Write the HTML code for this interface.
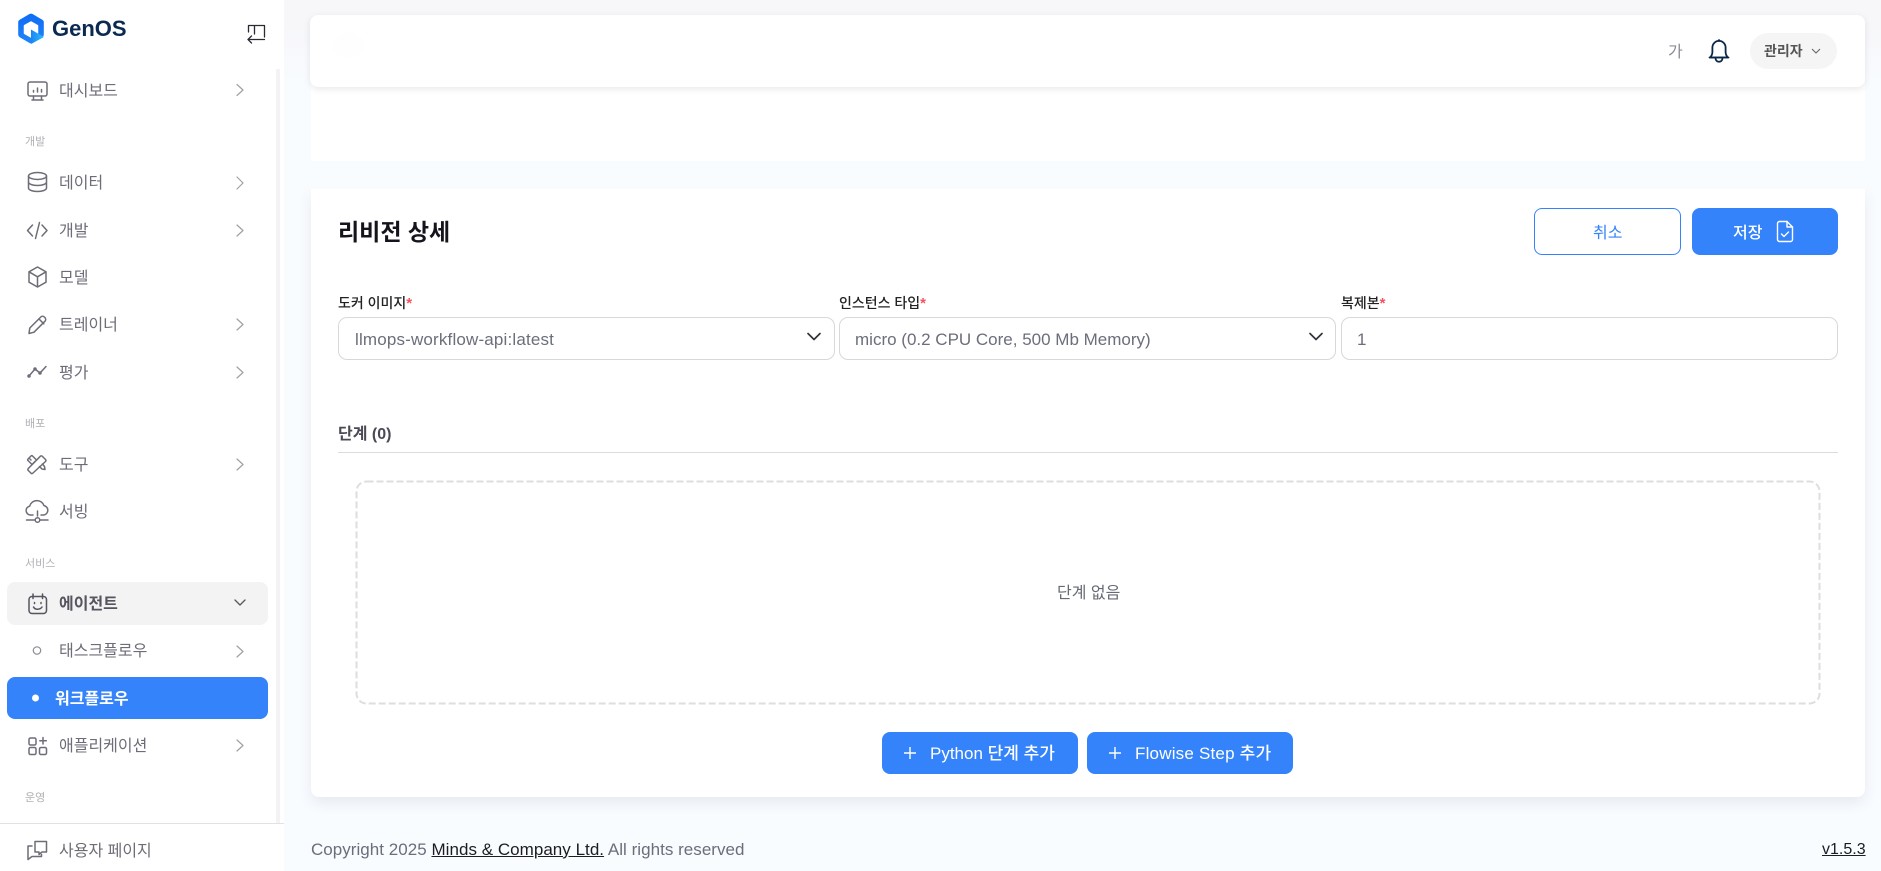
<!DOCTYPE html>
<html lang="ko"><head><meta charset="utf-8"><title>GenOS</title>
<style>
*{box-sizing:border-box}
html,body{margin:0;padding:0;width:1881px;height:871px;overflow:hidden;background:#f9fcff;font-family:"Liberation Sans","Noto Sans CJK KR",sans-serif}
.t{position:absolute;white-space:nowrap;line-height:24px;height:24px}
.box{position:absolute}
.m{font-size:16px;color:#6d6d78;left:59px}
.s{font-size:11px;color:#b0b0b6;left:25px}
.lab{font-size:14px;color:#222;font-weight:500;top:291px}
.lab i{color:#f4525f;font-style:normal;font-weight:700;font-size:15px}
.sel{position:absolute;top:317px;height:43px;border:1.5px solid #d8d8da;border-radius:9px;background:#fff}
.val{font-size:17px;color:#6b6e7b;top:328px}
.btn{position:absolute;background:#3483fa;border-radius:8px}
</style></head><body>
<div class="box" style="left:284px;top:0;width:1597px;height:90px;background:linear-gradient(#f7f7fa,#f7f7fa 30%,#f9fcff)"></div>

<!-- cards -->
<div class="box" style="left:311px;top:60px;width:1554px;height:101px;background:#fff"></div>
<div class="box" style="left:311px;top:161px;width:1554px;height:28px;background:#f9fcff"></div>
<div class="box" style="left:311px;top:189px;width:1554px;height:608px;background:#fff;border-radius:0 0 8px 8px;box-shadow:0 6px 14px rgba(40,60,90,.09);clip-path:inset(0 -30px -30px -30px)"></div>
<div class="box" style="left:310px;top:15px;width:1555px;height:72px;background:#fff;border-radius:8px;box-shadow:0 2px 7px rgba(30,30,60,.1)"></div>
<div class="box" style="left:333px;top:33px;width:31px;height:25px;background:#fefefe;border-radius:50%"></div>

<!-- header -->
<div class="t" style="left:1668px;top:41px;font-size:16px;color:#8c8c94">가</div>
<svg class="box" style="left:1705px;top:36px" width="28" height="30" viewBox="0 0 28 30" fill="none" stroke="#0b2748" stroke-width="1.8" stroke-linecap="round" stroke-linejoin="round"><path d="M5 21.5c1.6-1.6 2.4-3.2 2.4-5.5v-4.5a6.6 6.6 0 0 1 13.2 0V16c0 2.300.8 3.900 2.400 5.500z"/><path d="M4.500 21.500h19"/><path d="M10.500 22c0 5 7 5 7 0"/><path d="M14 4v1"/></svg>
<div class="box" style="left:1750px;top:33px;width:87px;height:36px;border-radius:18px;background:#f5f5f5"></div>
<div class="t" style="left:1764px;top:39px;font-size:14px;font-weight:700;color:#555">관리자</div>
<svg class="box" style="left:1811px;top:47px" width="10" height="8" viewBox="0 0 10 8" fill="none" stroke="#666" stroke-width="1.100"><path d="M1 2l4 4 4-4"/></svg>

<!-- title & buttons -->
<div class="t" style="left:338px;top:219px;font-size:23px;font-weight:700;color:#14141c;line-height:26px;height:26px">리비전 상세</div>
<div class="box" style="left:1534px;top:208px;width:147px;height:47px;border:1.500px solid #3483fa;border-radius:8px;background:#fff"></div>
<div class="t" style="left:1593px;top:221.500px;font-size:16px;color:#3483fa">취소</div>
<div class="btn" style="left:1692px;top:208px;width:146px;height:47px"></div>
<div class="t" style="left:1733px;top:221.500px;font-size:16px;color:#fff;font-weight:500">저장</div>
<svg class="box" style="left:1776px;top:220px" width="18" height="23" viewBox="0 0 18 23" fill="none" stroke="#fff" stroke-width="1.400" stroke-linecap="round" stroke-linejoin="round"><path d="M3.500 1.500H11l5.500 5.500v12.500a2 2 0 0 1-2 2h-11a2 2 0 0 1-2-2v-16a2 2 0 0 1 2-2z"/><path d="M11 1.500V7h5.500"/><path d="M5.500 14l2.500 2.500 4.500-4.500"/></svg>

<!-- form -->
<div class="t lab" style="left:338px">도커 이미지<i>*</i></div>
<div class="t lab" style="left:839px">인스턴스 타입<i>*</i></div>
<div class="t lab" style="left:1341px">복제본<i>*</i></div>
<div class="sel" style="left:338px;width:497px"></div>
<div class="sel" style="left:839px;width:497px"></div>
<div class="sel" style="left:1341px;width:497px"></div>
<div class="t val" style="left:355px;letter-spacing:.17px">llmops-workflow-api:latest</div>
<div class="t val" style="left:855px">micro (0.2 CPU Core, 500 Mb Memory)</div>
<div class="t val" style="left:1357px">1</div>
<svg class="box" style="left:806px;top:331px" width="16" height="12" viewBox="0 0 16 12" fill="none" stroke="#33333c" stroke-width="1.700" stroke-linecap="round" stroke-linejoin="round"><path d="M2 2.500l6 6 6-6"/></svg>
<svg class="box" style="left:1308px;top:331px" width="16" height="12" viewBox="0 0 16 12" fill="none" stroke="#33333c" stroke-width="1.700" stroke-linecap="round" stroke-linejoin="round"><path d="M2 2.500l6 6 6-6"/></svg>

<div class="t" style="left:338px;top:423px;font-size:16px;font-weight:600;color:#4a4a55">단계 (0)</div>
<div class="box" style="left:338px;top:452px;width:1500px;height:1px;background:#dcdcdf"></div>

<svg class="box" style="left:355px;top:480px" width="1466" height="225" viewBox="0 0 1466 225" fill="none"><rect x="1.500" y="1.500" width="1463" height="222" rx="10" stroke="#dedede" stroke-width="2" stroke-dasharray="7 3"/></svg>
<div class="t" style="left:1057px;top:582px;font-size:16px;color:#666a75">단계 없음</div>

<div class="btn" style="left:882px;top:732px;width:196px;height:42px"></div>
<svg class="box" style="left:903px;top:746px" width="14" height="14" viewBox="0 0 14 14" stroke="#fff" stroke-width="1.400"><path d="M1 7h12M7 1v12"/></svg>
<div class="t" style="left:930px;top:741.500px;font-size:17px;font-weight:500;color:#fff">Python 단계 추가</div>
<div class="btn" style="left:1087px;top:732px;width:206px;height:42px"></div>
<svg class="box" style="left:1108px;top:746px" width="14" height="14" viewBox="0 0 14 14" stroke="#fff" stroke-width="1.400"><path d="M1 7h12M7 1v12"/></svg>
<div class="t" style="left:1135px;top:741.500px;font-size:17px;font-weight:500;color:#fff;letter-spacing:.2px">Flowise Step 추가</div>

<!-- footer -->
<div class="t" style="left:311px;top:837.500px;font-size:17px;color:#6b6e7b;letter-spacing:.03px">Copyright 2025 <span style="color:#1c1c24;text-decoration:underline">Minds &amp; Company Ltd.</span> All rights reserved</div>
<div class="t" style="left:1822px;top:837.500px;font-size:16px;color:#1c1c24;text-decoration:underline">v1.5.3</div>

<!-- sidebar -->
<div class="box" style="left:0;top:0;width:284px;height:871px;background:#fff"></div>
<div class="box" style="left:276px;top:69px;width:4px;height:754px;background:#f3f3f5"></div>
<div class="box" style="left:7px;top:582px;width:261px;height:43px;background:#f3f3f4;border-radius:8px"></div>
<div class="box" style="left:7px;top:677px;width:261px;height:42px;background:#3483fa;border-radius:8px"></div>
<div class="box" style="left:0;top:823px;width:284px;height:1px;background:#e2e2e4"></div>

<!-- logo -->
<svg class="box" style="left:0;top:0" width="284" height="871" viewBox="0 0 284 871" fill="none">
<defs><linearGradient id="g" x1="0" y1="0" x2="0" y2="1"><stop offset="0" stop-color="#0f6af6"/><stop offset="1" stop-color="#1f86f8"/></linearGradient>
<linearGradient id="h" x1="0" y1="0" x2="1" y2="0"><stop offset="0" stop-color="#1a84f6"/><stop offset="1" stop-color="#2cc0f8"/></linearGradient></defs>
<path d="M29.500 14.500a3 3 0 0 1 3 0l9.800 5.700a3 3 0 0 1 1.500 2.500v12.600a3 3 0 0 1-1.500 2.500l-9.800 5.700a3 3 0 0 1-3 0l-9.800-5.700a3 3 0 0 1-1.500-2.500V22.700a3 3 0 0 1 1.500-2.500z" fill="url(#g)" transform="translate(0 -.5)"/>
<path d="M31 22l6.500 3.700v7.600L31 37l-6.500-3.700v-7.600z" fill="#fff" stroke="#fff" stroke-width="1.500" stroke-linejoin="round"/>
<path d="M31 29.500l13 7.500-13 7z" fill="url(#h)"/>
<!-- collapse -->
<g stroke="#2a2a33" stroke-width="1.300" stroke-linecap="round" stroke-linejoin="round">
<path d="M248.500 32V25.500h16V37M254.500 26v8"/><path d="M264.500 39.500H248M251.500 36L248 39.500l3.500 3.500"/>
</g>
<g stroke="#6d6d78" stroke-width="1.500" stroke-linecap="round" stroke-linejoin="round">
<!-- dashboard -->
<rect x="28" y="82" width="19" height="14" rx="2"/><path d="M33.500 96v3.500M41.500 96v3.500M32 100h11M33.500 92v-1.500M37.500 92v-4M41.500 92v-2.500"/>
<!-- data -->
<ellipse cx="37.500" cy="176" rx="9" ry="3.500"/><path d="M28.500 176v12c0 2 4 3.500 9 3.500s9-1.500 9-3.500v-12M28.500 182c0 2 4 3.500 9 3.500s9-1.500 9-3.500"/>
<!-- code -->
<path d="M32.500 225l-5 5.500 5 5.500M42 225l5 5.500-5 5.500M39.500 222.500l-4 16"/>
<!-- cube -->
<path d="M37.500 267l8.500 4.800v10.400l-8.500 4.800-8.500-4.800V271.800zM29 271.800l8.500 5 8.500-5M37.500 276.800V287"/>
<!-- pencil -->
<path d="M29 333.500l.8-5.500 11-11a2.500 2.500 0 0 1 3.500 0l.7.700a2.500 2.500 0 0 1 0 3.500l-11 11zM39 319l4.800 4.800"/>
<!-- chart -->
<path d="M29 376l6-7 5 4 6-6.500" /><circle cx="29" cy="376" r="1" /><circle cx="35" cy="369" r="1"/><circle cx="40" cy="373" r="1"/>
<!-- tools -->
<path d="M42 456l3.500 3.500a1.500 1.500 0 0 1 0 2L33 473a1.500 1.500 0 0 1-1.800.4l-3-3a1.500 1.500 0 0 1 .2-2l12-12.200a1.500 1.500 0 0 1 1.600-.2z"/><path d="M31 456l-3 3a1 1 0 0 0 0 1.500l4 4 4.500-4.500-4-4a1 1 0 0 0-1.500 0zM39.500 466.500l2.500 2.500 3 .5-.5-3-2-2.500M30 459l1 1M41 468l1 1"/>
<!-- cloud -->
<path d="M33 515h-2.500a4.500 4.500 0 0 1-.8-8.900 7.500 7.500 0 0 1 14.300-.5 4.800 4.800 0 0 1 0 9.400H41M37.500 511v5M26.500 520h8.500M40 520h8"/><circle cx="37.500" cy="520" r="2.300"/>
<!-- agent -->
<rect x="29" y="596.500" width="17.500" height="17" rx="3" stroke="#55555f"/><path d="M33 594v4.500M42.500 594v4.500M33.500 607c1.500 3 6.500 3 8.500 0" stroke="#55555f"/><path d="M34.500 602.500v1M41 602.500v1" stroke="#55555f"/>
<!-- apps -->
<rect x="29" y="738" width="7" height="7" rx="1.500"/><rect x="29" y="747.500" width="7" height="7" rx="1.500"/><rect x="39.500" y="747.500" width="7" height="7" rx="1.500"/><path d="M43 737.500v6.500M39.800 740.800h6.500"/>
<!-- user page -->
<path d="M35 841.500h11.500v10.500h-4.500l-3 2.500V852h-4z"/><path d="M32 846h-4v13.500l4-3h9.500v-2"/>
</g>
<!-- chevrons -->
<g stroke="#a0a0a6" stroke-width="1.200" stroke-linecap="round" stroke-linejoin="round">
<path d="M237 84.500l6 5.500-6 5.500M237 177l6 6-6 6M237 225l6 5.500-6 5.500M237 319l6 5.500-6 5.500M237 367l6 5.500-6 5.500M237 459l6 5.500-6 5.500M237 646l6 5.500-6 5.500M237 740l6 5.500-6 5.500"/>
</g>
<path d="M235 600l5 5 5-5" stroke="#55555f" stroke-width="1.300" stroke-linecap="round" stroke-linejoin="round"/>
<circle cx="37" cy="650.500" r="3.700" stroke="#8a8a92" stroke-width="1.200"/>
<circle cx="35.500" cy="698" r="3.500" fill="#fff"/>
</svg>

<div class="t" style="left:52px;top:14px;font-size:22px;font-weight:700;color:#0b2a52;line-height:30px;height:30px">GenOS</div>
<div class="t m" style="top:79.500px">대시보드</div>
<div class="t s" style="top:130px">개발</div>
<div class="t m" style="top:171.500px">데이터</div>
<div class="t m" style="top:219.500px">개발</div>
<div class="t m" style="top:266.500px">모델</div>
<div class="t m" style="top:313.500px">트레이너</div>
<div class="t m" style="top:361.500px">평가</div>
<div class="t s" style="top:412px">배포</div>
<div class="t m" style="top:453.500px">도구</div>
<div class="t m" style="top:500.500px">서빙</div>
<div class="t s" style="top:551.500px">서비스</div>
<div class="t m" style="top:592.500px;font-weight:700;color:#55555f">에이전트</div>
<div class="t m" style="top:639.500px">태스크플로우</div>
<div class="t m" style="top:687.500px;left:55px;font-weight:700;color:#fff">워크플로우</div>
<div class="t m" style="top:734.500px">애플리케이션</div>
<div class="t s" style="top:785.500px">운영</div>
<div class="t m" style="top:839.500px">사용자 페이지</div>
</body></html>
